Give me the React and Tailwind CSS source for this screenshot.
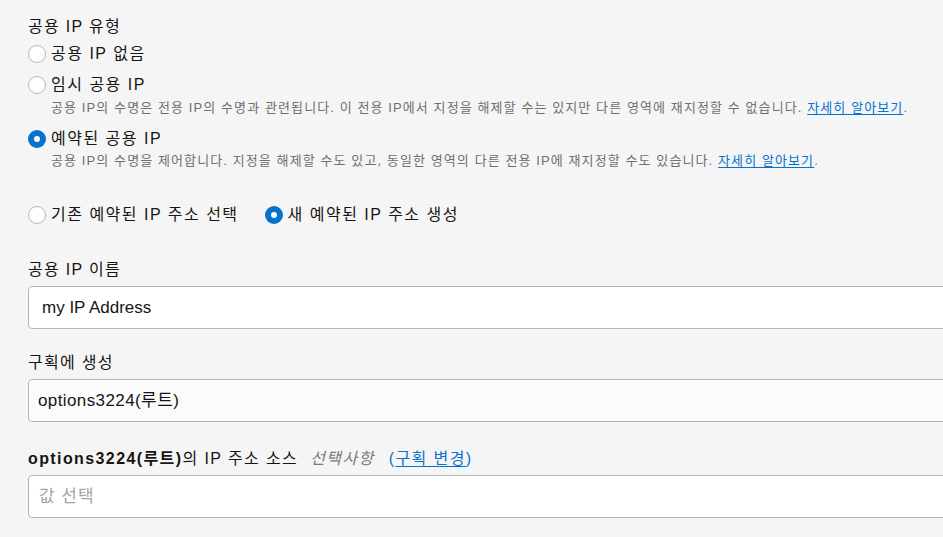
import React from 'react'

const font = { fontFamily: '"Liberation Sans", "Noto Sans CJK KR", sans-serif' }

function Radio({ checked }) {
  return checked ? (
    <span className="w-[18px] h-[18px] rounded-full bg-[#0572ce] flex items-center justify-center shrink-0">
      <span className="w-[6px] h-[6px] rounded-full bg-white" />
    </span>
  ) : (
    <span className="w-[18px] h-[18px] rounded-full border border-[#b8b8b8] bg-white shrink-0" />
  )
}

function Option({ checked, label, className = '' }) {
  return (
    <div className={`flex items-center gap-[5px] h-[24px] ${className}`}>
      <Radio checked={checked} />
      <span className="text-[16px] tracking-[1.5px] text-[#161513] whitespace-nowrap">{label}</span>
    </div>
  )
}

function Desc({ children, className = '' }) {
  return (
    <p className={`pl-[23px] text-[13px] leading-[18px] tracking-[1.1px] text-[#6f6f6f] whitespace-nowrap ${className}`}>
      {children}
    </p>
  )
}

function Link({ children }) {
  return <a className="text-[#0572ce] underline underline-offset-2">{children}</a>
}

function Field({ children, placeholder, bg = 'bg-white', className = '' }) {
  return (
    <div
      className={`h-[43px] w-[960px] border border-[#b3b5bb] rounded-[4px] flex items-center px-[13px] text-[17px] ${bg} ${className} ${
        placeholder ? 'text-[#a5a5a5]' : 'text-[#161513]'
      }`}
    >
      {children}
    </div>
  )
}

export default function App() {
  return (
    <div style={font} className="bg-[#f5f5f5] h-[537px] overflow-hidden pl-[28px] pt-[17px]">
      <h3 className="text-[16px] leading-[20px] tracking-[1.3px] text-[#161513]">공용 IP 유형</h3>

      <Option label="공용 IP 없음" className="mt-[5px]" />
      <Option label="임시 공용 IP" className="mt-[7px]" />
      <Desc className="mt-[2px]">
        공용 IP의 수명은 전용 IP의 수명과 관련됩니다. 이 전용 IP에서 지정을 해제할 수는 있지만 다른 영역에 재지정할 수 없습니다.{' '}
        <Link>자세히 알아보기</Link>.
      </Desc>
      <Option checked label="예약된 공용 IP" className="mt-[10px]" />
      <Desc className="mt-[1px]">
        공용 IP의 수명을 제어합니다. 지정을 해제할 수도 있고, 동일한 영역의 다른 전용 IP에 재지정할 수도 있습니다.{' '}
        <Link>자세히 알아보기</Link>.
      </Desc>

      <div className="flex items-center gap-[26px] mt-[33px]">
        <Option label="기존 예약된 IP 주소 선택" />
        <Option checked label="새 예약된 IP 주소 생성" />
      </div>

      <label className="block text-[16px] leading-[20px] tracking-[1.3px] text-[#161513] mt-[33px]">공용 IP 이름</label>
      <Field className="mt-[6px]">my IP Address</Field>

      <label className="block text-[16px] leading-[20px] tracking-[1.3px] text-[#161513] mt-[24px]">구획에 생성</label>
      <Field bg="bg-[#fbfbfb]" className="mt-[6px] !pl-[9px] tracking-[0.4px]">options3224(루트)</Field>

      <label className="block text-[16px] leading-[20px] tracking-[1.4px] text-[#161513] mt-[27px] whitespace-nowrap">
        <b>options3224(루트)</b>의 IP 주소 소스
        <i className="text-[#7a7a7a] ml-[12px]">선택사항</i>
        <span className="ml-[14px] text-[#0572ce]">
          (<span className="underline underline-offset-2">구획 변경</span>)
        </span>
      </label>
      <Field placeholder className="mt-[6px] !pl-[10px] tracking-[1px]">값 선택</Field>
    </div>
  )
}
